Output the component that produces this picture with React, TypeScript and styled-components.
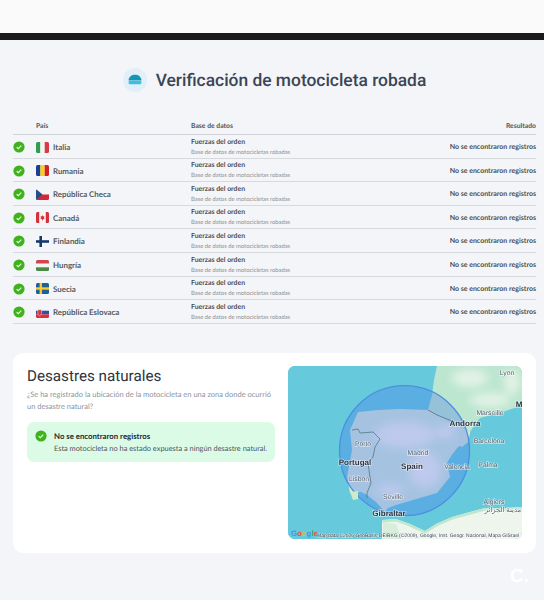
import * as React from 'react'
import styled, { createGlobalStyle } from 'styled-components'

const GlobalStyle = createGlobalStyle`
  html, body {
    margin: 0;
    padding: 0;
    background: #f3f5f8;
    text-rendering: geometricPrecision;
  }
  * {
    box-sizing: border-box;
  }
`

const Page = styled.div`
  position: relative;
  width: 544px;
  height: 600px;
  overflow: hidden;
  background: #f3f5f8;
  font-family: Lato, Roboto, sans-serif;
  color: #374151;
`
const TopStrip = styled.div`
  height: 33px;
  background: #fafafa;
`
const BlackBar = styled.div`
  height: 7px;
  background: #1b1b1b;
`
const Main = styled.main`
  padding: 0 8px 0 13px;
`
const Header = styled.header`
  height: 78px;
  padding-top: 2px;
  display: flex;
  align-items: center;
  justify-content: center;
  gap: 9px;
`
const Title = styled.h1`
  margin: 0;
  padding-top: 1px;
  font-family: Roboto, sans-serif;
  font-size: 17.4px;
  font-weight: 500;
  color: #3a4556;
  white-space: nowrap;
`
const Row = styled.div<{ $head?: boolean }>`
  display: grid;
  grid-template-columns: 23px 155px 1fr auto;
  align-items: center;
  height: ${p => (p.$head ? '17px' : '23.6px')};
  padding-top: ${p => (p.$head ? '0' : '1.5px')};
  border-bottom: ${p => (p.$head ? '1.5px solid #cfd3d9' : '1px solid #d6d9de')};
`
const HeadCell = styled.div<{ $col?: number }>`
  font-size: 6.8px;
  font-weight: 700;
  color: #50555c;
  grid-column: ${p => p.$col ?? 'auto'};
`
const CountryCell = styled.div`
  display: flex;
  align-items: center;
  gap: 4px;
  font-size: 7.9px;
  font-weight: 700;
  color: #555a60;
`
const Source = styled.div`
  display: flex;
  flex-direction: column;
  gap: 1px;
  line-height: 9px;
`
const SourceName = styled.span`
  font-size: 6.9px;
  font-weight: 700;
  color: #4a4d52;
`
const SourceNote = styled.span`
  font-size: 5.85px;
  color: #8b8f95;
`
const Outcome = styled.div`
  font-size: 7px;
  font-weight: 700;
  color: #4a4d52;
`
const Card = styled.section`
  margin-top: 29px;
  height: 200px;
  padding: 13px 14px;
  display: flex;
  gap: 13px;
  background: #fff;
  border-radius: 10px;
`
const CardText = styled.div`
  width: 248px;
  flex: none;
`
const CardTitle = styled.h2`
  margin: 0;
  font-family: Roboto, sans-serif;
  font-size: 15.2px;
  line-height: 20px;
  font-weight: 400;
  color: #2d3440;
`
const CardIntro = styled.p`
  margin: 3px 0 0;
  font-size: 7.5px;
  line-height: 12px;
  color: #8b929c;
`
const Notice = styled.div`
  margin-top: 9px;
  height: 40px;
  padding: 9px 8px 0;
  display: flex;
  gap: 7px;
  align-items: flex-start;
  background: #dcfbe6;
  border-radius: 7px;
  svg {
    flex: none;
    margin-top: -1px;
  }
`
const NoticeText = styled.div`
  display: flex;
  flex-direction: column;
  gap: 3px;
  line-height: 10px;
`
const NoticeTitle = styled.strong`
  font-size: 7.8px;
  font-weight: 700;
  color: #1f2937;
`
const NoticeBody = styled.span`
  font-size: 7.4px;
  color: #4b5563;
  white-space: nowrap;
`
const MapFrame = styled.div`
  width: 234px;
  height: 173px;
  flex: none;
  border-radius: 7px;
  overflow: hidden;
  background: #66c9dc;
`
const MapDrawing = styled.svg`
  display: block;
  font-family: "Liberation Sans", Arial, sans-serif;
  filter: blur(0.4px);
`
const Label = styled.text<{ $strong?: boolean }>`
  font-size: ${p => (p.$strong ? '8px' : '6.8px')};
  font-weight: ${p => (p.$strong ? 700 : 400)};
  fill: ${p => (p.$strong ? '#2c3440' : '#56606e')};
  stroke: rgba(255, 255, 255, 0.6);
  stroke-width: 1.4px;
  paint-order: stroke;
  text-anchor: middle;
`
const Credit = styled.text`
  font-size: 5px;
  fill: #3c4350;
  stroke: rgba(255, 255, 255, 0.6);
  stroke-width: 1px;
  paint-order: stroke;
`
const Mark = styled.div`
  position: absolute;
  right: 15px;
  bottom: 13px;
  font-family: "Liberation Sans", Arial, sans-serif;
  font-size: 19px;
  font-weight: 700;
  line-height: 20px;
  color: #fff;
`

const CheckIcon = () => (
  <svg width="12" height="12" viewBox="0 0 12 12" aria-hidden="true">
    <circle cx="6" cy="6" r="5.6" fill="#3fb21c" />
    <path d="M3.7 6.2 5.3 7.7 8.3 4.6" fill="none" stroke="#e8f8e0" strokeWidth="1.2" />
  </svg>
)

const BikeIcon = () => (
  <svg width="24" height="24" viewBox="0 0 24 24" aria-hidden="true">
    <circle cx="12" cy="12" r="12" fill="#e2eef8" />
    <path d="M5.5 12.5C5.8 8.6 8.6 6.8 12 6.8s6.2 1.8 6.5 5.7z" fill="#1596b8" />
    <rect x="5.5" y="13" width="13" height="3.2" rx="1.4" fill="#35c3e0" />
  </svg>
)

const flags: Record<string, React.ReactNode> = {
  Italia: (
    <>
      <rect width="4.4" height="11" fill="#2f9d52" />
      <rect x="4.4" width="4.3" height="11" fill="#f4f5f2" />
      <rect x="8.7" width="4.3" height="11" fill="#d63c46" />
    </>
  ),
  Rumania: (
    <>
      <rect width="4.4" height="11" fill="#1c3f94" />
      <rect x="4.4" width="4.3" height="11" fill="#fbd016" />
      <rect x="8.7" width="4.3" height="11" fill="#d2202c" />
    </>
  ),
  'República Checa': (
    <>
      <rect width="13" height="5.5" fill="#f4f5f7" />
      <rect y="5.5" width="13" height="5.5" fill="#d4283a" />
      <path d="M0 0 6.5 5.5 0 11z" fill="#22508f" />
    </>
  ),
  Canadá: (
    <>
      <rect width="13" height="11" fill="#f6f6f6" />
      <rect width="3.2" height="11" fill="#d8303a" />
      <rect x="9.8" width="3.2" height="11" fill="#d8303a" />
      <path d="M6.5 3 7.2 4.4 8.4 4.1 8 5.9 8.8 6.2 6.9 7.6V8.6H6.1V7.6L4.2 6.2 5 5.9 4.6 4.1 5.8 4.4z" fill="#d8303a" />
    </>
  ),
  Finlandia: (
    <>
      <rect width="13" height="11" fill="#f5f6f8" />
      <rect x="3.4" width="2.6" height="11" fill="#17386f" />
      <rect y="4.2" width="13" height="2.6" fill="#17386f" />
    </>
  ),
  Hungría: (
    <>
      <rect width="13" height="3.7" fill="#d1464a" />
      <rect y="3.7" width="13" height="3.6" fill="#f5f5f3" />
      <rect y="7.3" width="13" height="3.7" fill="#4a8a45" />
    </>
  ),
  Suecia: (
    <>
      <rect width="13" height="11" fill="#1e5f96" />
      <rect x="3.6" width="2.4" height="11" fill="#f8cb2e" />
      <rect y="4.3" width="13" height="2.4" fill="#f8cb2e" />
    </>
  ),
  'República Eslovaca': (
    <>
      <rect width="13" height="3.7" fill="#f4f5f7" />
      <rect y="3.7" width="13" height="3.6" fill="#2456a4" />
      <rect y="7.3" width="13" height="3.7" fill="#d9303e" />
      <path d="M1.8 2.8H5.6V6.4C5.6 7.6 4.6 8.2 3.7 8.7 2.8 8.2 1.8 7.6 1.8 6.4z" fill="#d9303e" stroke="#f4f5f7" strokeWidth=".5" />
    </>
  ),
}

const Flag = ({ name }: { name: string }) => (
  <svg width="13" height="11" viewBox="0 0 13 11" aria-hidden="true" style={{ borderRadius: 1.5 }}>
    {flags[name]}
  </svg>
)

const IberiaMap = () => (
  <MapDrawing width="234" height="173" viewBox="288 366 234 173" role="img" aria-label="Mapa">
    <defs>
      <filter id="soft" x="-20%" y="-20%" width="140%" height="140%">
        <feGaussianBlur stdDeviation="4" />
      </filter>
      <clipPath id="iberia">
        <path d="M358 412 378 410 400 409 428 410 452 423 470 432 468 442 458 447 451 456 447 463 450 477 437 493 413 500 396 505 388 508 385 512 376 502 367 495 361 492 350 493 347 477 352 450 350 430z" />
      </clipPath>
      <clipPath id="france">
        <path d="M437 366 434 380 432 395 428 410 452 423 470 432 474 426 480 418 491 415 500 413 523 405V366z" />
      </clipPath>
      <clipPath id="africa">
        <path d="M382 520 396 519 410 524 425 531 436 524 452 517 470 512 485 508 505 508 523 507V540H382z" />
      </clipPath>
    </defs>
    <rect x="288" y="366" width="234" height="173" fill="#66c9dc" />
    <g clipPath="url(#france)">
      <rect x="425" y="366" width="100" height="66" fill="#bce6cf" />
      <g filter="url(#soft)" fill="#e2f3e6">
        <ellipse cx="470" cy="378" rx="18" ry="9" />
        <ellipse cx="490" cy="400" rx="20" ry="7" />
        <ellipse cx="512" cy="382" rx="8" ry="12" />
      </g>
    </g>
    <path d="M452 423 470 432 468 442 462 447 452 440z" fill="#d5ecd8" />
    <g clipPath="url(#iberia)">
      <rect x="340" y="405" width="135" height="110" fill="#d4e8dc" />
      <g filter="url(#soft)" fill="#f8f2ee">
        <ellipse cx="405" cy="435" rx="30" ry="13" />
        <ellipse cx="425" cy="470" rx="16" ry="18" />
        <ellipse cx="390" cy="490" rx="14" ry="6" />
        <ellipse cx="445" cy="432" rx="10" ry="7" />
      </g>
    </g>
    <g clipPath="url(#africa)">
      <rect x="380" y="505" width="145" height="36" fill="#eef5ec" />
      <path d="M382 520 396 519 410 524 425 531 436 524 452 517 470 512 485 508 505 508 523 507" fill="none" stroke="#bfe6cf" strokeWidth="5" />
      <path d="M383 522 396 524 402 540H383z" fill="#d8eedc" />
    </g>
    <circle cx="404.5" cy="450.7" r="65" fill="rgba(70, 118, 236, 0.33)" stroke="#4c8fe0" strokeWidth="1.3" />
    <path d="M350 492 358 491 358 499 353 500z" fill="#cdebc6" />
    <path d="M352 430 358 429 360 433 373 432 380 439 375 447 373 457 368 463 370 477 371 483 367 493 367 498" fill="none" stroke="#4d6a80" strokeWidth=".7" />
    <path d="M428 410 437 415 452 421" fill="none" stroke="#4d6a80" strokeWidth=".7" />
    <Label x="507" y="375">Lyon</Label>
    <Label x="490" y="414.5">Marseille</Label>
    <Label x="519" y="407" $strong>M</Label>
    <Label x="465" y="426" $strong>Andorra</Label>
    <Label x="489" y="442.5">Barcelona</Label>
    <Label x="488" y="466.5">Palma</Label>
    <Label x="457" y="468.5">Valencia</Label>
    <Label x="418" y="454.5">Madrid</Label>
    <Label x="412" y="469" $strong>Spain</Label>
    <Label x="363" y="445.5">Porto</Label>
    <Label x="355" y="465" $strong>Portugal</Label>
    <Label x="359" y="480.5">Lisbon</Label>
    <Label x="393" y="498.5">Seville</Label>
    <Label x="389" y="516" $strong>Gibraltar</Label>
    <Label x="494" y="504">Algiers</Label>
    <Label x="503" y="511.5">مدينة الجزائر</Label>
    <text x="291" y="536" fontSize="7.8" fontWeight="700" opacity=".85">
      <tspan fill="#4285f4">G</tspan>
      <tspan fill="#ea4335">o</tspan>
      <tspan fill="#fbbc05">o</tspan>
      <tspan fill="#4285f4">g</tspan>
      <tspan fill="#34a853">l</tspan>
      <tspan fill="#ea4335">e</tspan>
    </text>
    <Credit x="317" y="537">Map data ©2026 GeoBasis-DE/BKG (©2009), Google, Inst. Geogr. Nacional, Mapa GISrael</Credit>
  </MapDrawing>
)

const countries = [
  'Italia',
  'Rumania',
  'República Checa',
  'Canadá',
  'Finlandia',
  'Hungría',
  'Suecia',
  'República Eslovaca',
]

export default function App() {
  return (
    <Page>
      <GlobalStyle />
      <TopStrip />
      <BlackBar />
      <Main>
        <Header>
          <BikeIcon />
          <Title>Verificación de motocicleta robada</Title>
        </Header>
        <Row $head>
          <HeadCell $col={2}>País</HeadCell>
          <HeadCell>Base de datos</HeadCell>
          <HeadCell>Resultado</HeadCell>
        </Row>
        {countries.map(name => (
          <Row key={name}>
            <CheckIcon />
            <CountryCell>
              <Flag name={name} />
              {name}
            </CountryCell>
            <Source>
              <SourceName>Fuerzas del orden</SourceName>
              <SourceNote>Base de datos de motocicletas robadas</SourceNote>
            </Source>
            <Outcome>No se encontraron registros</Outcome>
          </Row>
        ))}
        <Card>
          <CardText>
            <CardTitle>Desastres naturales</CardTitle>
            <CardIntro>
              ¿Se ha registrado la ubicación de la motocicleta en una zona donde ocurrió un desastre natural?
            </CardIntro>
            <Notice>
              <CheckIcon />
              <NoticeText>
                <NoticeTitle>No se encontraron registros</NoticeTitle>
                <NoticeBody>Esta motocicleta no ha estado expuesta a ningún desastre natural.</NoticeBody>
              </NoticeText>
            </Notice>
          </CardText>
          <MapFrame>
            <IberiaMap />
          </MapFrame>
        </Card>
      </Main>
      <Mark>C.</Mark>
    </Page>
  )
}
